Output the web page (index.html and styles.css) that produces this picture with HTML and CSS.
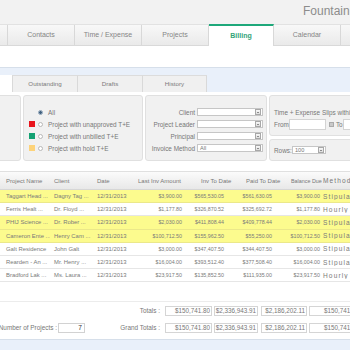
FILE: index.html
```html
<!DOCTYPE html>
<html>
<head>
<meta charset="utf-8">
<link rel="stylesheet" href="styles.css">
</head>
<body>
<div class="page">
  <header class="topbar"><span class="brand">Fountainhead</span></header>
  <nav class="tabs">
    <div class="tab cut"></div>
    <div class="tab">Contacts</div>
    <div class="tab">Time / Expense</div>
    <div class="tab">Projects</div>
    <div class="tab active">Billing</div>
    <div class="tab">Calendar</div>
    <div class="tab last"></div>
  </nav>
  <div class="gap"></div>
  <div class="subbar">
    <div class="subtab active"></div>
    <div class="subtab">Outstanding</div>
    <div class="subtab">Drafts</div>
    <div class="subtab end">History</div>
  </div>
  <div class="filters">
    <div class="panel p-left"></div>
    <div class="panel p-radios">
      <div class="frow"><span class="sw none"></span><span class="radio on"></span>All</div>
      <div class="frow"><span class="sw red"></span><span class="radio"></span>Project with unapproved T+E</div>
      <div class="frow"><span class="sw green"></span><span class="radio"></span>Project with unbilled T+E</div>
      <div class="frow"><span class="sw yellow"></span><span class="radio"></span>Project with hold T+E</div>
    </div>
    <div class="panel p-mid">
      <div class="frow"><span class="lbl">Client</span><span class="sel"><span class="val"></span><span class="btn"></span></span></div>
      <div class="frow"><span class="lbl">Project Leader</span><span class="sel"><span class="val"></span><span class="btn"></span></span></div>
      <div class="frow"><span class="lbl">Principal</span><span class="sel"><span class="val"></span><span class="btn"></span></span></div>
      <div class="frow"><span class="lbl">Invoice Method</span><span class="sel"><span class="val">All</span><span class="btn"></span></span></div>
    </div>
    <div class="rcol">
      <div class="panel p-time">
        <div class="trow">Time + Expense Slips within</div>
        <div class="trow"><span class="from">From</span><span class="inp"></span><span class="cal"></span><span class="to">To</span><span class="inp"></span></div>
      </div>
      <div class="panel p-rows">
        <span class="rowslbl">Rows:</span><span class="sel small"><span class="val">100</span><span class="btn"></span></span>
      </div>
    </div>
  </div>

  <div class="grid">
    <div class="gr head">
      <div class="c1">Project Name</div><div class="c2">Client</div><div class="c3">Date</div><div class="c4">Last Inv Amount</div><div class="c5">Inv To Date</div><div class="c6">Paid To Date</div><div class="c7">Balance Due</div><div class="c8">Method</div>
    </div>
    <div class="gr y">
      <div class="c1">Taggart Head ...</div><div class="c2">Dagny Tag ...</div><div class="c3">12/31/2013</div><div class="c4 m">$3,900.00</div><div class="c5 m">$565,530.05</div><div class="c6 m">$561,630.05</div><div class="c7 m">$3,900.00</div><div class="c8">Stipulated</div>
    </div>
    <div class="gr">
      <div class="c1">Ferris Healt ...</div><div class="c2">Dr. Floyd ...</div><div class="c3">12/31/2013</div><div class="c4 m">$1,177.80</div><div class="c5 m">$326,870.52</div><div class="c6 m">$325,692.72</div><div class="c7 m">$1,177.80</div><div class="c8">Hourly</div>
    </div>
    <div class="gr y">
      <div class="c1">PHIJ Science ...</div><div class="c2">Dr. Rober ...</div><div class="c3">12/31/2013</div><div class="c4 m">$2,030.00</div><div class="c5 m">$411,808.44</div><div class="c6 m">$409,778.44</div><div class="c7 m">$2,030.00</div><div class="c8">Stipulated</div>
    </div>
    <div class="gr y">
      <div class="c1">Cameron Ente ...</div><div class="c2">Henry Cam ...</div><div class="c3">12/31/2013</div><div class="c4 m">$100,712.50</div><div class="c5 m">$155,962.50</div><div class="c6 m">$55,250.00</div><div class="c7 m">$100,712.50</div><div class="c8">Stipulated</div>
    </div>
    <div class="gr">
      <div class="c1">Galt Residence</div><div class="c2">John Galt</div><div class="c3">12/31/2013</div><div class="c4 m">$3,000.00</div><div class="c5 m">$347,407.50</div><div class="c6 m">$344,407.50</div><div class="c7 m">$3,000.00</div><div class="c8">Stipulated</div>
    </div>
    <div class="gr">
      <div class="c1">Rearden - An ...</div><div class="c2">Mr. Henry ...</div><div class="c3">12/31/2013</div><div class="c4 m">$16,004.00</div><div class="c5 m">$393,512.40</div><div class="c6 m">$377,508.40</div><div class="c7 m">$16,004.00</div><div class="c8">Stipulated</div>
    </div>
    <div class="gr">
      <div class="c1">Bradford Lak ...</div><div class="c2">Ms. Laura ...</div><div class="c3">12/31/2013</div><div class="c4 m">$23,917.50</div><div class="c5 m">$135,852.50</div><div class="c6 m">$111,935.00</div><div class="c7 m">$23,917.50</div><div class="c8">Hourly</div>
    </div>
  </div>

  <div class="totals">
    <div class="trw">
      <div class="tleft"></div>
      <div class="tlabel">Totals :</div>
      <div class="box b1">$150,741.80</div>
      <div class="box b2">$2,336,943.91</div>
      <div class="box b3">$2,186,202.11</div>
      <div class="box b4">$150,741.80</div>
    </div>
    <div class="trw">
      <div class="tleft"><span class="nplbl"><span>Number of Projects :</span></span><span class="npbox">7</span></div>
      <div class="tlabel">Grand Totals :</div>
      <div class="box b1">$150,741.80</div>
      <div class="box b2">$2,336,943.91</div>
      <div class="box b3">$2,186,202.11</div>
      <div class="box b4">$150,741.80</div>
    </div>
  </div>
  <div class="band"></div>
</div>
</body>
</html>
```

FILE: styles.css
```css
* { box-sizing: border-box; margin: 0; padding: 0; }
body { margin: 0; width: 350px; height: 350px; overflow: hidden; background: #fff; font-family: "Liberation Sans", Arial, sans-serif; color: #777; }
.page { width: 350px; height: 350px; overflow: hidden; }

.topbar { height: 24px; background: #f2f2f2; padding-left: 303px; white-space: nowrap; overflow: hidden; font-size: 12px; line-height: 22px; color: #8c8c8c; }

.tabs { display: flex; height: 22px; background: linear-gradient(#f8f8f8, #eaeaea); border-top: 1px solid #e2e2e2; border-bottom: 1px solid #d9d9d9; white-space: nowrap; }
.tab { flex: none; width: 67px; border-right: 1px solid #d8d8d8; font-size: 7px; color: #858585; text-align: center; line-height: 20px; }
.tab.cut { width: 8px; }
.tab.active { width: 65px; height: 22px; margin-top: -1px; margin-bottom: -1px; background: #fff; border-top: 2px solid #1ea87a; color: #34a378; font-weight: bold; line-height: 19px; }
.tab.last { width: 20px; border-right: none; }

.gap { height: 21px; }

.subbar { height: 25px; display: flex; align-items: flex-end; background: #e9f0fa; border-top: 1px solid #d6dfea; }
.subtab { flex: none; width: 65px; height: 17px; background: #f0f0f0; border-left: 1px solid #d9d9d9; border-top: 1px solid #dcdcdc; font-size: 6.2px; color: #7a7a7a; text-align: center; line-height: 16px; }
.subtab.active { width: 12px; background: #fff; border-left: none; border-top: none; height: 17px; }
.subtab.end { border-right: 1px solid #d9d9d9; }

.filters { margin-top: 3px; height: 66px; width: 420px; display: flex; gap: 2px; font-size: 6.4px; color: #777; }
.panel { background: #f1f1f1; border: 1px solid #e0e0e0; border-radius: 3px; flex: none; }
.p-left { width: 31px; margin-left: -10px; }
.p-radios { width: 120px; padding: 10px 0 0 5px; }
.frow { height: 12px; display: flex; align-items: center; white-space: nowrap; }
.sw { width: 6px; height: 6px; margin-right: 3px; flex: none; }
.sw.none { background: transparent; }
.sw.red { background: #e8141c; }
.sw.green { background: #13a172; }
.sw.yellow { background: #fdd37a; }
.radio { width: 5px; height: 5px; border-radius: 50%; border: 1px solid #b8b8b8; background: #fff; margin-right: 5px; flex: none; }
.radio.on { background: radial-gradient(circle, #40607e 0 1.3px, #dfe6ee 1.6px); border-color: #8aa0b5; }

.p-mid { width: 122px; padding: 10px 0 0 0; }
.lbl { width: 49px; text-align: right; margin-right: 2px; flex: none; }
.sel { width: 66px; height: 8px; background: #fff; border: 1px solid #c6c6c6; display: flex; align-items: center; flex: none; }
.sel .val { flex: 1; padding-left: 2px; font-size: 5.6px; line-height: 6px; }
.sel .btn { width: 6px; height: 6px; margin-right: 1px; border: 1px solid #a8a8a8; background: linear-gradient(#f8f8f8, #dedede); position: relative; flex: none; }
.sel .btn::after { content: ""; position: absolute; left: 1px; top: 1.5px; border-left: 1.5px solid transparent; border-right: 1.5px solid transparent; border-top: 1.5px solid #333; }

.rcol { width: 100px; display: flex; flex-direction: column; gap: 3px; flex: none; }
.p-time { height: 41px; padding: 10px 0 0 4px; }
.trow { height: 12px; display: flex; align-items: center; white-space: nowrap; }
.from { width: 16px; }
.inp { width: 37px; height: 11px; background: #fff; border: 1px solid #d3d3d3; flex: none; }
.cal { width: 5px; height: 5px; background: #c9c9c9; border: 1px solid #aaa; margin: 0 2px 0 3px; flex: none; }
.to { width: 10px; }
.p-rows { height: 22px; padding-left: 4px; display: flex; align-items: center; }
.rowslbl { width: 18px; }
.sel.small { width: 34px; }

.grid { margin-top: 10px; width: 420px; font-size: 5.9px; color: #7a7a7a; }
.gr { display: grid; grid-template-columns: 50px 44px 41px 53px 48px 49px 37px 98px; height: 13.2px; border-bottom: 1px solid #e6e6e6; align-items: center; white-space: nowrap; }
.gr > div { overflow: hidden; }
.gr.head { height: 19px; background: linear-gradient(#fbfbfb, #e8e8e8); border-top: 1px solid #e0e0e0; border-bottom: 1px solid #d6d6d6; font-size: 6px; color: #777; }
.gr.y { background: #fcfb8e; border-bottom-color: #ebe88a; }
.c1 { padding-left: 6px; }
.c2 { padding-left: 4px; }
.c3 { padding-left: 3px; }
.head .c4 { padding-left: 3px; }
.head .c5 { padding-left: 13px; }
.head .c6 { padding-left: 10px; }
.head .c7 { padding-left: 6px; font-size: 5.4px; }
.c8 { padding-left: 1px; font-size: 6.6px; letter-spacing: 1.1px; }
.head .c8 { font-size: 6.6px; letter-spacing: 1.1px; }
.m { text-align: right; font-size: 5.3px; }
.c4.m { padding-right: 6px; }
.c5.m { padding-right: 12px; }
.c6.m { padding-right: 13px; }
.c7.m { padding-right: 2px; }

.totals { margin-top: 19px; border-top: 1px solid #ececec; padding-top: 3px; width: 420px; font-size: 6.4px; color: #777; }
.trw { display: flex; align-items: center; height: 11px; margin-bottom: 6px; white-space: nowrap; }
.tleft { width: 110px; display: flex; align-items: center; flex: none; }
.nplbl { width: 58px; display: flex; justify-content: flex-end; padding-right: 1px; flex: none; }
.npbox { width: 27px; height: 10px; background: #fff; border: 1px solid #d2d2d2; text-align: right; padding-right: 2px; line-height: 8px; color: #333; font-size: 6.6px; flex: none; }
.tlabel { width: 50px; text-align: right; margin-right: 5px; flex: none; }
.box { height: 10px; background: #fff; border: 1px solid #d5d5d5; text-align: right; line-height: 8px; padding-right: 1px; flex: none; font-size: 6.3px; }
.b1 { width: 47px; margin-right: 2px; }
.b2 { width: 44px; margin-right: 3px; }
.b3 { width: 46px; margin-right: 2px; }
.b4 { width: 52px; }

.band { margin-top: 0; height: 20px; background: #e9f0fa; border-top: 1px solid #d6dfea; }
```
